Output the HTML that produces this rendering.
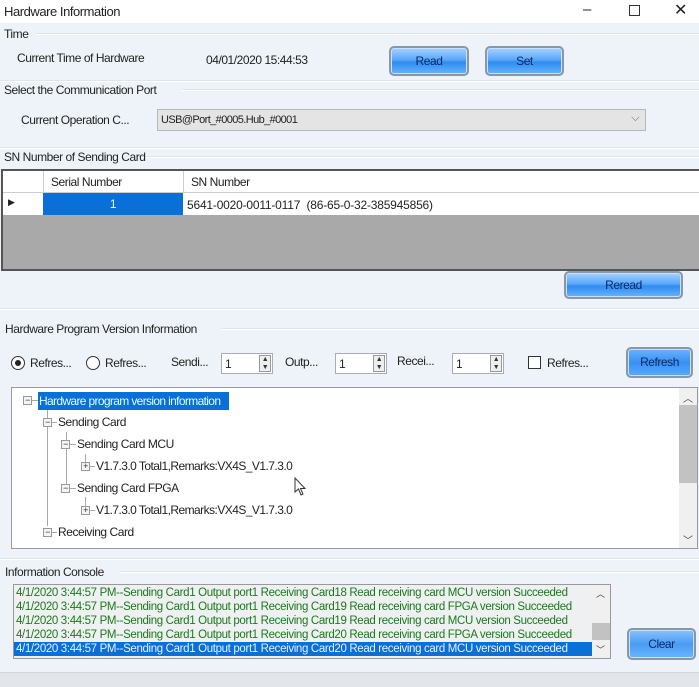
<!DOCTYPE html>
<html><head><meta charset="utf-8"><style>
*{box-sizing:border-box;margin:0;padding:0}
body{width:699px;height:687px;overflow:hidden;background:#eef3f9;font-family:"Liberation Sans",sans-serif;font-size:12px;color:#222;position:relative;letter-spacing:-0.45px}
.a{position:absolute;white-space:nowrap}
.sep{position:absolute;height:2px;background:#dde4ec;border-bottom:1px solid #fff}
.btn{position:absolute;border:2px solid #8a97a5;border-radius:5px;background:linear-gradient(#a6d2ff 0%,#5aa8fa 45%,#2f8cf0 55%,#66b4ff 100%);color:#0a2a66;text-align:center;font-size:12px;box-shadow:inset 0 0 0 1px #c4e2ff}
.spin{position:absolute;width:52px;height:21px;background:#fff;border:1px solid #aab;font-size:12px;padding:3px 0 0 3px}
.spin i{position:absolute;right:1px;top:1px;width:12px;height:17px;border:1px solid #999;background:#eee;font-style:normal;font-size:7px;line-height:8px;text-align:center;color:#333}
.tl{position:absolute;white-space:nowrap;font-size:12px}
.pm{position:absolute;width:9px;height:9px;border:1px solid #999;background:#f4f4f4;font-size:9px;line-height:7px;text-align:center;color:#333}
.vl{position:absolute;width:1px;background:#aaa}
.hl{position:absolute;height:1px;background:#aaa}
.con div{height:14px;line-height:14px;color:#1b7a1b;font-size:11.5px;padding-left:2px;white-space:nowrap;letter-spacing:-0.35px}
</style></head><body>
<div class="a" style="left:0;top:0;width:699px;height:23px;background:#fff"></div>
<div class="a" style="left:4px;top:4px;font-size:13px">Hardware Information</div>
<div class="a" style="left:583px;top:1px;font-size:15px">–</div>
<div class="a" style="left:629px;top:5px;width:11px;height:11px;border:1.3px solid #333"></div>
<div class="a" style="left:674px;top:0px;font-size:16px">✕</div>

<div class="sep" style="left:36px;top:33px;width:663px"></div>
<div class="a" style="left:4px;top:27px">Time</div>
<div class="a" style="left:17px;top:51px">Current Time of Hardware</div>
<div class="a" style="left:206px;top:53px">04/01/2020 15:44:53</div>
<div class="btn" style="left:389px;top:46px;width:80px;height:30px;line-height:26px">Read</div>
<div class="btn" style="left:485px;top:46px;width:79px;height:30px;line-height:26px">Set</div>
<div class="sep" style="left:0;top:80px;width:699px"></div>

<div class="sep" style="left:182px;top:89px;width:517px"></div>
<div class="a" style="left:4px;top:83px">Select the Communication Port</div>
<div class="a" style="left:21px;top:113px">Current Operation C...</div>
<div class="a" style="left:157px;top:109px;width:489px;height:22px;background:#e4e4e4;border:1px solid #b8b8b8;font-size:11px;padding:4px 0 0 3px;letter-spacing:-0.6px">USB@Port_#0005.Hub_#0001<span style="position:absolute;right:6px;top:2px;color:#666">⌵</span></div>
<div class="sep" style="left:0;top:147px;width:699px"></div>

<div class="sep" style="left:126px;top:156px;width:573px"></div>
<div class="a" style="left:4px;top:150px">SN Number of Sending Card</div>
<div class="a" style="left:1px;top:169px;width:698px;height:102px;background:#a9a9a9;border:2px solid #555;border-right:none"></div>
<div class="a" style="left:3px;top:171px;width:696px;height:22px;background:#fff;border-bottom:1px solid #ccc"></div>
<div class="a" style="left:3px;top:193px;width:696px;height:22px;background:#fff"></div>
<div class="a" style="left:43px;top:171px;width:1px;height:44px;background:#ccc"></div>
<div class="a" style="left:183px;top:171px;width:1px;height:22px;background:#ccc"></div>
<div class="a" style="left:51px;top:175px">Serial Number</div>
<div class="a" style="left:191px;top:175px">SN Number</div>
<div class="a" style="left:43px;top:193px;width:140px;height:22px;background:#0a6fd6;color:#dfe;text-align:center;line-height:22px">1</div>
<div class="a" style="left:8px;top:197px;font-size:9px">▶</div>
<div class="a" style="left:187px;top:198px;letter-spacing:-0.2px">5641-0020-0011-0117&nbsp;&nbsp;(86-65-0-32-385945856)</div>
<div class="btn" style="left:564px;top:271px;width:119px;height:28px;line-height:24px">Reread</div>
<div class="sep" style="left:0;top:308px;width:699px"></div>

<div class="sep" style="left:222px;top:328px;width:477px"></div>
<div class="a" style="left:5px;top:322px">Hardware Program Version Information</div>
<div class="a" style="left:11px;top:356px;width:14px;height:14px;border:1.5px solid #333;border-radius:50%;background:#fff"><div style="position:absolute;left:2.5px;top:2.5px;width:6px;height:6px;border-radius:50%;background:#222"></div></div>
<div class="a" style="left:30px;top:356px">Refres...</div>
<div class="a" style="left:86px;top:356px;width:14px;height:14px;border:1.5px solid #333;border-radius:50%;background:#fff"></div>
<div class="a" style="left:105px;top:356px">Refres...</div>
<div class="a" style="left:171px;top:355px">Sendi...</div>
<div class="spin" style="left:221px;top:353px">1<i>▲<br>▼</i></div>
<div class="a" style="left:285px;top:355px">Outp...</div>
<div class="spin" style="left:335px;top:353px">1<i>▲<br>▼</i></div>
<div class="a" style="left:397px;top:354px">Recei...</div>
<div class="spin" style="left:452px;top:353px">1<i>▲<br>▼</i></div>
<div class="a" style="left:528px;top:356px;width:13px;height:13px;border:1.3px solid #333;background:#fff"></div>
<div class="a" style="left:547px;top:356px">Refres...</div>
<div class="btn" style="left:626px;top:347px;width:67px;height:31px;line-height:27px;background:linear-gradient(#6ab2ff,#3a90f2 50%,#5aaaff)">Refresh</div>

<div class="a" style="left:11px;top:387px;width:687px;height:162px;background:#fff;border:1px solid #999"></div>
<div class="a" style="left:679px;top:388px;width:18px;height:160px;background:#f0f0f0"></div>
<div class="a" style="left:679px;top:405px;width:18px;height:78px;background:#c2c2c2"></div>
<div class="a" style="left:683px;top:390px;font-size:10px;color:#444">︿</div>
<div class="a" style="left:683px;top:532px;font-size:10px;color:#444">﹀</div>
<div class="pm" style="left:23px;top:396px">−</div>
<div class="hl" style="left:32px;top:400px;width:6px"></div>
<div class="tl" style="left:38px;top:392px;height:18px;width:191px;background:#0a6fd6;color:#dff;padding:2px 0 0 1px;letter-spacing:-0.65px;overflow:hidden">Hardware program version information</div>
<div class="vl" style="left:47px;top:410px;height:116px"></div>
<div class="pm" style="left:43px;top:418px">−</div>
<div class="hl" style="left:52px;top:422px;width:5px"></div>
<div class="tl" style="left:58px;top:415px">Sending Card</div>
<div class="vl" style="left:66px;top:432px;height:56px"></div>
<div class="pm" style="left:61px;top:440px">−</div>
<div class="hl" style="left:70px;top:444px;width:6px"></div>
<div class="tl" style="left:77px;top:437px">Sending Card MCU</div>
<div class="vl" style="left:85px;top:454px;height:8px"></div>
<div class="pm" style="left:81px;top:462px">+</div>
<div class="hl" style="left:90px;top:466px;width:5px"></div>
<div class="tl" style="left:96px;top:459px;letter-spacing:-0.55px">V1.7.3.0 Total1,Remarks:VX4S_V1.7.3.0</div>
<div class="pm" style="left:61px;top:484px">−</div>
<div class="hl" style="left:70px;top:488px;width:6px"></div>
<div class="tl" style="left:77px;top:481px">Sending Card FPGA</div>
<div class="vl" style="left:85px;top:497px;height:9px"></div>
<div class="pm" style="left:81px;top:506px">+</div>
<div class="hl" style="left:90px;top:510px;width:5px"></div>
<div class="tl" style="left:96px;top:503px;letter-spacing:-0.55px">V1.7.3.0 Total1,Remarks:VX4S_V1.7.3.0</div>
<div class="pm" style="left:43px;top:528px">−</div>
<div class="hl" style="left:52px;top:532px;width:5px"></div>
<div class="tl" style="left:58px;top:525px">Receiving Card</div>
<svg class="a" style="left:294px;top:477px" width="14" height="20"><path d="M1 1 L1 15 L4.5 12 L7 18 L9 17 L6.5 11.5 L11 11.5 Z" fill="#fff" stroke="#333" stroke-width="1"/></svg>
<div class="sep" style="left:0;top:558px;width:699px"></div>

<div class="sep" style="left:120px;top:571px;width:579px"></div>
<div class="a" style="left:5px;top:565px">Information Console</div>
<div class="a con" style="left:13px;top:584px;width:598px;height:75px;background:#eef0f2;border:1px solid #999;padding-top:1px">
<div>4/1/2020 3:44:57 PM--Sending Card1 Output port1 Receiving Card18 Read receiving card MCU version Succeeded</div>
<div>4/1/2020 3:44:57 PM--Sending Card1 Output port1 Receiving Card19 Read receiving card FPGA version Succeeded</div>
<div>4/1/2020 3:44:57 PM--Sending Card1 Output port1 Receiving Card19 Read receiving card MCU version Succeeded</div>
<div>4/1/2020 3:44:57 PM--Sending Card1 Output port1 Receiving Card20 Read receiving card FPGA version Succeeded</div>
<div style="background:#0a6fd6;color:#e6f0ff;width:578px;overflow:hidden">4/1/2020 3:44:57 PM--Sending Card1 Output port1 Receiving Card20 Read receiving card MCU version Succeeded</div>
</div>
<div class="a" style="left:592px;top:585px;width:18px;height:73px;background:#f0f0f0"></div>
<div class="a" style="left:592px;top:623px;width:18px;height:17px;background:#c2c2c2"></div>
<div class="a" style="left:596px;top:587px;font-size:9px;color:#444">︿</div>
<div class="a" style="left:596px;top:643px;font-size:9px;color:#444">﹀</div>
<div class="btn" style="left:627px;top:628px;width:69px;height:32px;line-height:28px;background:linear-gradient(#8ac2ff,#4a9cf4 50%,#6ab6ff)">Clear</div>
<div class="a" style="left:0;top:672px;width:699px;height:15px;background:#e2e6ea;border-top:1px solid #d0d6dc"></div>
</body></html>
